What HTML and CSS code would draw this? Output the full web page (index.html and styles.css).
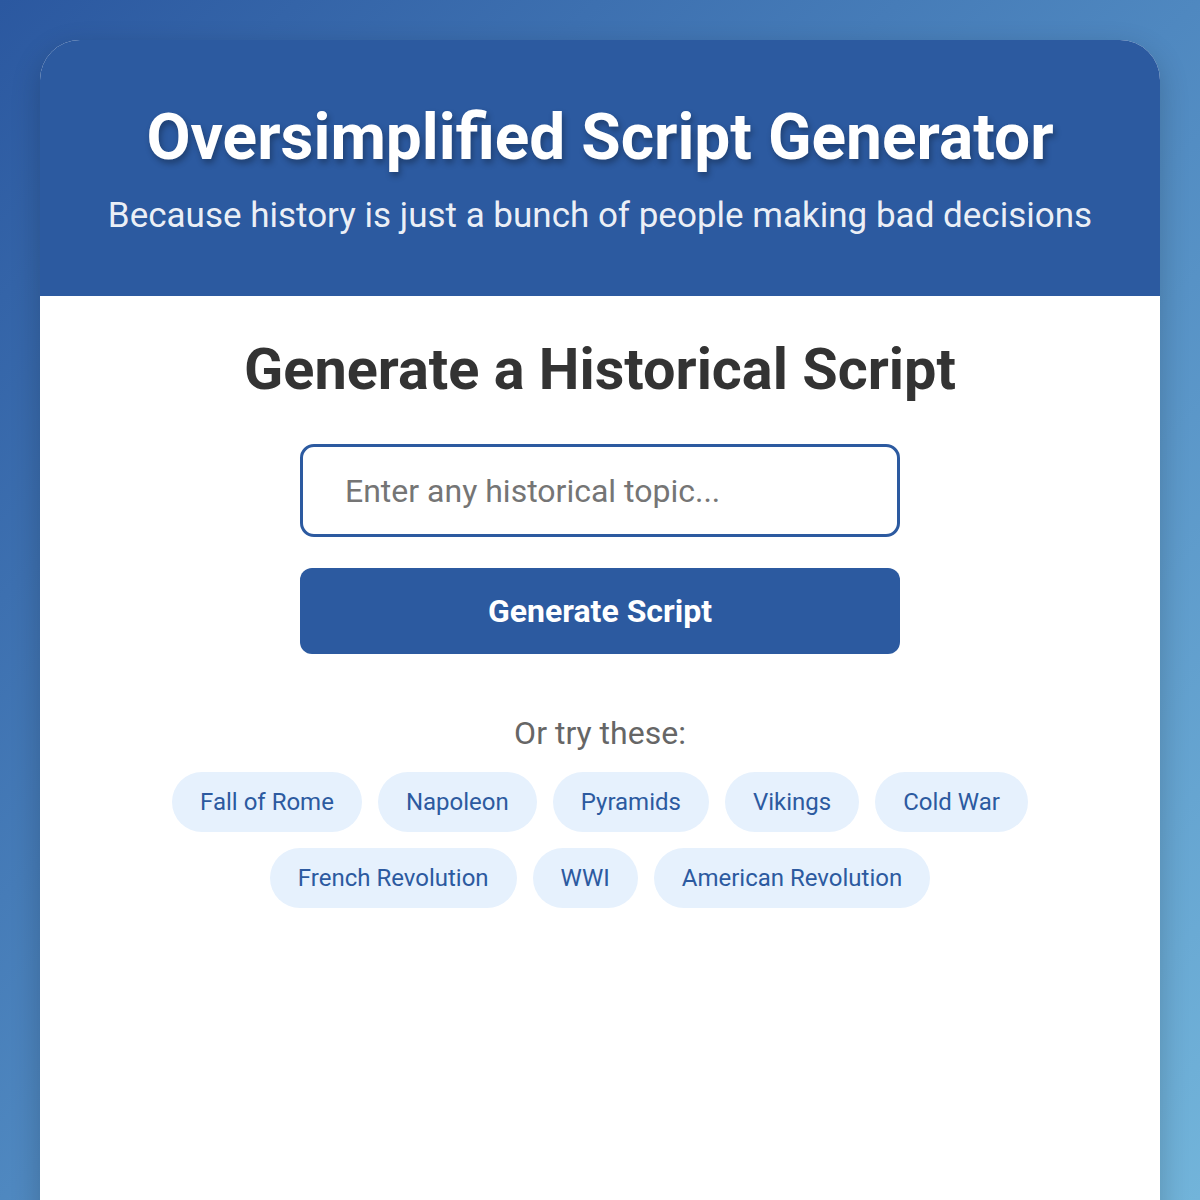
FILE: index.html
```html
<!DOCTYPE html>
<html lang="en">
<head>
<meta charset="utf-8">
<title>Oversimplified Script Generator</title>
<link rel="stylesheet" href="styles.css">
</head>
<body>
<div class="app">
  <header class="hero">
    <h1 class="hero-title">Oversimplified Script Generator</h1>
    <p class="hero-sub">Because history is just a bunch of people making bad decisions</p>
  </header>
  <main class="panel">
    <h2 class="panel-title">Generate a Historical Script</h2>
    <div class="form">
      <input class="topic" type="text" placeholder="Enter any historical topic...">
      <button class="generate">Generate Script</button>
    </div>
    <p class="try">Or try these:</p>
    <div class="chips">
      <span class="chip">Fall of Rome</span>
      <span class="chip">Napoleon</span>
      <span class="chip">Pyramids</span>
      <span class="chip">Vikings</span>
      <span class="chip">Cold War</span>
      <span class="chip">French Revolution</span>
      <span class="chip">WWI</span>
      <span class="chip">American Revolution</span>
    </div>
  </main>
</div>
</body>
</html>
```

FILE: styles.css
```css
* { box-sizing: border-box; }
html, body { height: 100%; }
body {
  margin: 0;
  padding: 40px 40px 0;
  font-family: Roboto, "Liberation Sans", sans-serif;
  background: linear-gradient(135deg, #2b58a0 0%, #4f88c0 50%, #72b4da 100%);
  min-height: 1200px;
  overflow: hidden;
}
.app {
  background: #fff;
  border-radius: 40px 40px 0 0;
  min-height: 1200px;
  box-shadow: 0 10px 30px rgba(0,0,0,0.2);
  overflow: hidden;
}
.hero {
  background: #2c5aa0;
  color: #fff;
  text-align: center;
  height: 256px;
  padding-top: 62px;
}
.hero-title {
  margin: 0;
  font-size: 64px;
  font-weight: 700;
  line-height: 72px;
  text-shadow: 2px 4px 6px rgba(0,0,0,0.3);
}
.hero-sub {
  margin: 22px 0 0;
  font-size: 35px;
  line-height: 40px;
  color: rgba(255,255,255,0.92);
}
.panel {
  text-align: center;
  padding-top: 40px;
}
.panel-title {
  margin: 0;
  font-size: 57.6px;
  line-height: 68px;
  font-weight: 700;
  color: #333;
}
.form {
  display: flex;
  flex-direction: column;
  align-items: center;
  gap: 31px;
  margin-top: 40px;
}
.topic {
  width: 600px;
  height: 93px;
  border: 3px solid #2c5aa0;
  border-radius: 14px;
  padding: 0 42px;
  font-family: inherit;
  font-size: 32px;
  color: #333;
  outline: none;
}
.topic::placeholder { color: #757575; }
.generate {
  width: 600px;
  height: 86px;
  border: none;
  border-radius: 12px;
  background: #2c5aa0;
  color: #fff;
  font-family: inherit;
  font-size: 32px;
  font-weight: 700;
}
.try {
  margin: 60px 0 0;
  font-size: 32px;
  line-height: 38px;
  color: #666;
}
.chips {
  display: flex;
  flex-wrap: wrap;
  justify-content: center;
  gap: 16px;
  width: 880px;
  margin: 20px auto 0;
}
.chip {
  height: 60px;
  line-height: 60px;
  padding: 0 28px;
  border-radius: 30px;
  background: #e6f1fd;
  color: #2c5aa0;
  font-size: 24px;
}
```
